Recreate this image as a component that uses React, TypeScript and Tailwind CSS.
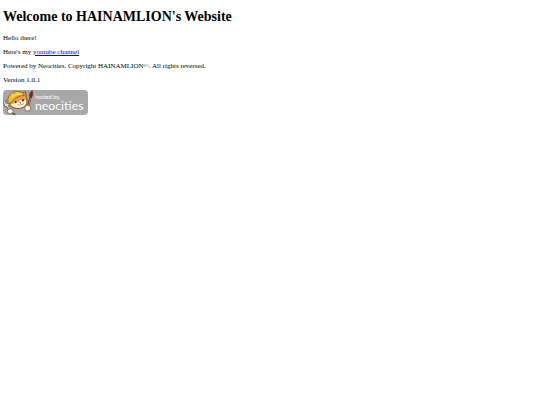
import React from 'react';

function NeocitiesBadge() {
  return (
    <svg viewBox="0 0 200 60" className="w-[85px] h-auto" role="img" aria-label="Hosted by Neocities">
      <rect width="200" height="59" rx="9" fill="#a8a8a8" />
      {/* fork */}
      <g fill="none" stroke="#555" strokeWidth="6" strokeLinecap="round">
        <path d="M3 27 L6 36 L13 33 L11 24 M8 33 L16 48" />
      </g>
      <g fill="none" stroke="#e0e3e6" strokeWidth="3" strokeLinecap="round">
        <path d="M3 27 L6 36 L13 33 L11 24 M8 33 L16 48" />
      </g>
      {/* brush */}
      <path d="M65 17 L58 41" stroke="#5b3630" strokeWidth="5" strokeLinecap="round" />
      <path d="M65 19 L59 39" stroke="#d98c80" strokeWidth="2" />
      <path d="M62 15 C61 8 65 4 69 1 C71 8 71 13 67 18 Z" fill="#7a2622" stroke="#5b3630" strokeWidth="1" />
      {/* head */}
      <path d="M16 22 C20 12 28 7 40 8 L53 4 L55 18 C60 28 55 39 44 42 C33 46 20 42 15 34 Z" fill="#ef9f42" stroke="#6d4a28" strokeWidth="2" />
      <path d="M31 26 C33 31 36 30 41 23 C45 27 49 26 53 23 C58 32 51 39 42 41 C31 43 21 40 19 33 C24 34 28 31 31 26 Z" fill="#fff3dc" />
      {/* hat */}
      <path d="M12 32 C9 19 15 9 25 5 C37 0 48 5 50 13 C38 13 27 19 20 30 Z" fill="#e9b833" stroke="#80602a" strokeWidth="2" />
      <path d="M15 23 C22 12 35 8 46 10 M21 9 L25 17 M32 5 L35 12" stroke="#ffe487" strokeWidth="2" fill="none" />
      {/* face */}
      <ellipse cx="30" cy="28" rx="2" ry="3" fill="#35251b" />
      <ellipse cx="47" cy="24" rx="2" ry="3" fill="#35251b" />
      <path d="M38 29 L43 28 L41 31 Z" fill="#65352a" />
      <path d="M34 34 C37 37 40 36 41 32 C43 36 47 35 49 31" fill="none" stroke="#65352a" strokeWidth="1" />
      {/* paws */}
      <ellipse cx="17" cy="50" rx="7" ry="6" fill="#fff5e8" stroke="#7b6452" strokeWidth="2" />
      <path d="M22 55 L29 58" stroke="#4d4038" strokeWidth="3" />
      <ellipse cx="58" cy="43" rx="7" ry="7" fill="#fff5e8" stroke="#7b6452" strokeWidth="2" />
      <g fill="#fff" fontFamily="Lato, 'Open Sans', sans-serif">
        <text x="76" y="22" fontSize="13">hosted by,</text>
        <text x="75" y="46" fontSize="29">neocities</text>
      </g>
    </svg>
  );
}

export default function App() {
  return (
    <main className="px-[3px] pt-2 font-['Liberation_Serif',serif] text-[7px] leading-[8px] text-black">
      <h1 className="mb-2 text-[14px] leading-[18px] font-bold">Welcome to HAINAMLION's Website</h1>
      <div className="flex flex-col items-start gap-[6px]">
        <p>Hello there!</p>
        <p>
          Here's my{' '}
          <a href="https://www.youtube.com" className="text-[#0000ee] underline">
            youtube channel
          </a>
        </p>
        <p>Powered by Neocities. Copyright HAINAMLION©. All rights reversed.</p>
        <p>Version 1.0.1</p>
        <a href="https://neocities.org" className="block">
          <NeocitiesBadge />
        </a>
      </div>
    </main>
  );
}
